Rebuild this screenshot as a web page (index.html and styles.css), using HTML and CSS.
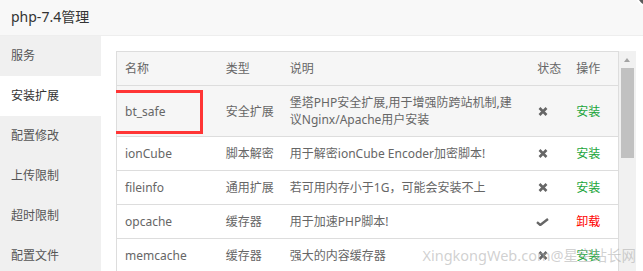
FILE: index.html
```html
<!DOCTYPE html>
<html lang="zh-CN">
<head>
<meta charset="utf-8">
<title>php-7.4管理</title>
<link rel="stylesheet" href="styles.css">
</head>
<body>
<div class="dialog">
  <div class="titlebar">php-7.4管理</div>
  <span class="close-btn"></span>
  <div class="body">
    <ul class="sidebar">
      <li>服务</li>
      <li class="active">安装扩展</li>
      <li>配置修改</li>
      <li>上传限制</li>
      <li>超时限制</li>
      <li>配置文件</li>
    </ul>
    <div class="main">
      <div class="scroller">
        <div class="table-wrap">
          <table class="ext-table">
            <colgroup>
              <col class="c-name"><col class="c-type"><col class="c-desc"><col class="c-state"><col class="c-op">
            </colgroup>
            <thead>
              <tr><th>名称</th><th>类型</th><th>说明</th><th>状态</th><th>操作</th></tr>
            </thead>
            <tbody>
              <tr class="hover"><td><span class="mark">bt_safe</span></td><td>安全扩展</td><td>堡塔PHP安全扩展,用于增强防跨站机制,建<br>议Nginx/Apache用户安装</td><td><svg class="ico-x" viewBox="0 0 10 9"><path d="M1.5 1L8.5 8M8.5 1L1.5 8"/></svg></td><td class="ok">安装</td></tr>
              <tr><td>ionCube</td><td>脚本解密</td><td>用于解密ionCube Encoder加密脚本!</td><td><svg class="ico-x" viewBox="0 0 10 9"><path d="M1.5 1L8.5 8M8.5 1L1.5 8"/></svg></td><td class="ok">安装</td></tr>
              <tr><td>fileinfo</td><td>通用扩展</td><td>若可用内存小于1G，可能会安装不上</td><td><svg class="ico-x" viewBox="0 0 10 9"><path d="M1.5 1L8.5 8M8.5 1L1.5 8"/></svg></td><td class="ok">安装</td></tr>
              <tr><td>opcache</td><td>缓存器</td><td>用于加速PHP脚本!</td><td><svg class="ico-ok" viewBox="0 0 13 8"><path d="M1 4.2L4.3 7L12 1"/></svg></td><td class="rm">卸载</td></tr>
              <tr><td>memcache</td><td>缓存器</td><td>强大的内容缓存器</td><td><svg class="ico-x" viewBox="0 0 10 9"><path d="M1.5 1L8.5 8M8.5 1L1.5 8"/></svg></td><td class="ok">安装</td></tr>
            </tbody>
          </table>
        </div>
        <div class="scrollbar">
          <span class="sb-up"></span>
          <span class="sb-thumb"></span>
        </div>
      </div>
      <div class="watermark">XingkongWeb.com@星空站长网</div>
    </div>
  </div>
</div>
</body>
</html>
```
FILE: styles.css
```css
html, body {
  margin: 0;
  padding: 0;
  background: #fff;
}
body {
  font-family: "Noto Sans", "Noto Sans CJK SC", sans-serif;
  color: #666;
  font-size: 12px;
  overflow: hidden;
}
.dialog {
  position: relative;
  width: 643px;
  height: 271px;
  overflow: hidden;
  display: flex;
  flex-direction: column;
}
.titlebar {
  height: 35px;
  line-height: 34px;
  padding-left: 11px;
  background: #f8f8f8;
  border-bottom: 1px solid #eee;
  font-size: 14px;
  color: #333;
  flex: none;
}
.close-btn {
  position: absolute;
  top: -22px;
  right: -22px;
  width: 26px;
  height: 26px;
  border-radius: 50%;
  background: #5a5a5a;
  border: 2px solid #fff;
}
.body {
  flex: 1;
  display: flex;
  min-height: 0;
}
.sidebar {
  list-style: none;
  margin: 0;
  padding: 0;
  width: 101px;
  flex: none;
  background: #f0f0f0;
}
.sidebar li {
  height: 40px;
  line-height: 40px;
  padding-left: 11px;
  color: #555;
}
.sidebar li.active {
  background: #fff;
  color: #333;
}
.main {
  position: relative;
  flex: 1;
  padding: 15px 7px 0 15px;
  min-width: 0;
}
.scroller {
  height: 100%;
  display: flex;
  overflow: hidden;
}
.table-wrap {
  flex: 1;
  min-width: 0;
}
.scrollbar {
  flex: none;
  width: 17px;
  background: #f1f1f1;
  display: flex;
  flex-direction: column;
  align-items: center;
}
.sb-up {
  flex: none;
  height: 17px;
  width: 17px;
  position: relative;
}
.sb-up::before {
  content: "";
  position: absolute;
  left: 5px;
  top: 7px;
  border-left: 3.5px solid transparent;
  border-right: 3.5px solid transparent;
  border-bottom: 4px solid #a3a3a3;
}
.sb-thumb {
  flex: none;
  width: 13px;
  height: 90px;
  background: #c1c1c1;
}
.ext-table {
  width: 100%;
  table-layout: fixed;
  border-collapse: collapse;
  border: 1px solid #ddd;
}
.c-name { width: 101px; }
.c-type { width: 64px; }
.c-desc { width: 247px; }
.c-state { width: 39px; }
.c-op { width: 50px; }
.ext-table th,
.ext-table td {
  padding: 8px;
  line-height: 17px;
  text-align: left;
  font-weight: normal;
  border-top: 1px solid #ddd;
  vertical-align: middle;
  color: #666;
  white-space: nowrap;
  overflow: hidden;
}
.ext-table thead th {
  background: #f6f6f6;
  color: #666;
}
.ext-table tr.hover td {
  background: #f6f6f6;
}
.ext-table td:first-child {
  overflow: visible;
}
.mark {
  position: relative;
}
.mark::after {
  content: "";
  position: absolute;
  left: -12px;
  top: -13px;
  width: 84px;
  height: 38px;
  border: 3px solid #ff3535;
}
.ico-x {
  width: 10px;
  height: 9px;
  display: block;
  margin-left: 1px;
  stroke: #666;
  stroke-width: 2.6;
  fill: none;
}
.ico-ok {
  width: 13px;
  height: 8px;
  display: block;
  margin-left: -1px;
  stroke: #666;
  stroke-width: 2.4;
  fill: none;
}
.ok { color: #20a53a !important; }
.rm { color: #f00 !important; }
.watermark {
  position: absolute;
  right: 7px;
  bottom: 6px;
  font-size: 14.5px;
  color: rgba(170, 170, 170, 0.55);
  white-space: nowrap;
  pointer-events: none;
}
```
